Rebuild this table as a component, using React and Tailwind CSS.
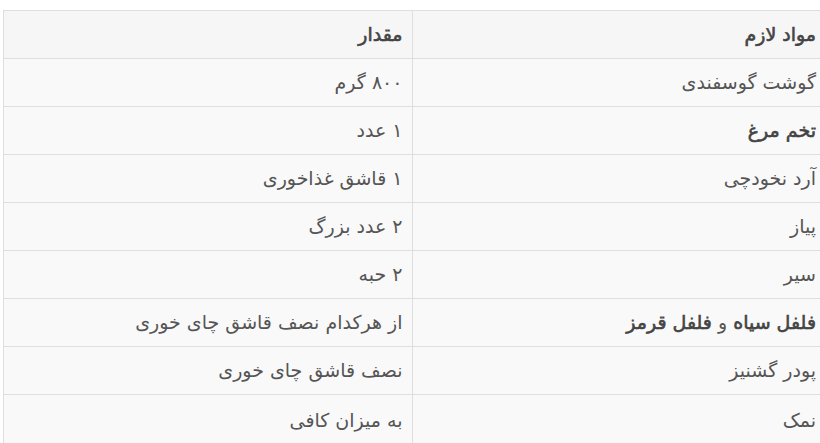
import React from 'react';

// DejaVu's bold Arabic runs much wider than the reference, so fake the weight
const Bold = ({ children }) => (
  <span className="font-normal text-[#444] [-webkit-text-stroke:0.6px_#444]">{children}</span>
);

const rows = [
  { name: 'گوشت گوسفندی', amount: '۸۰۰ گرم' },
  { name: <Bold>تخم مرغ</Bold>, amount: '۱ عدد' },
  { name: 'آرد نخودچی', amount: '۱ قاشق غذاخوری' },
  { name: 'پیاز', amount: '۲ عدد بزرگ' },
  { name: 'سیر', amount: '۲ حبه' },
  {
    name: (
      <>
        <Bold>فلفل سیاه</Bold> و <Bold>فلفل قرمز</Bold>
      </>
    ),
    amount: 'از هرکدام نصف قاشق چای خوری',
  },
  { name: 'پودر گشنیز', amount: 'نصف قاشق چای خوری' },
  { name: 'نمک', amount: 'به میزان کافی' },
];

export default function App() {
  return (
    <div className="bg-white w-[820px] h-[443px] overflow-hidden pt-[10px] pl-[3px]">
      <table
        dir="rtl"
        className="w-[822px] border-collapse table-fixed bg-[#f9f9f9] text-[19px] leading-none text-[#555] font-['DejaVu_Sans',sans-serif]"
      >
        <thead>
          <tr className="h-[48px] bg-[#f6f6f6]">
            <th className="w-[413px] text-right font-normal pr-[9px] border border-[#dedede] border-r-0">
              <Bold>مواد لازم</Bold>
            </th>
            <th className="text-right font-normal pr-[9px] border border-[#dedede]">
              <Bold>مقدار</Bold>
            </th>
          </tr>
        </thead>
        <tbody>
          {rows.map((r, i) => (
            <tr key={i} className="h-[48px] last:h-[51px]">
              <td className="text-right pr-[9px] border border-[#dedede] border-r-0">{r.name}</td>
              <td className="text-right pr-[9px] border border-[#dedede]">{r.amount}</td>
            </tr>
          ))}
        </tbody>
      </table>
    </div>
  );
}
